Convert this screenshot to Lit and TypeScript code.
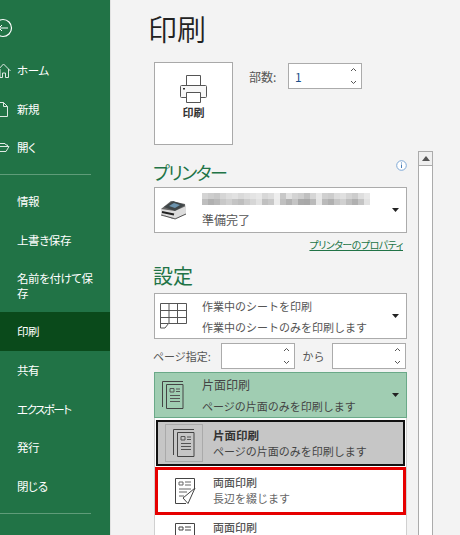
import { LitElement, html, css, svg } from "lit";
import { customElement } from "lit/decorators.js";

const BLUR = [
  [212,205,200,214,222,226,218,224,228,232,216,222,238,200,226,212,206,192,214,232,208,204,220,224,212,204,222,232],
  [190,176,184,200,208,196,190,204,214,226,192,200,236,192,178,196,170,168,186,230,186,176,198,208,190,176,196,226],
];

const chevrons = html`<span class="spin"><svg width="7" height="22" viewBox="0 0 7 22"><path class="chev" d="M1 6 3.500 3.500 6 6M1 16 3.500 18.500 6 16"/></svg></span>`;
const caret = html`<svg class="caret" width="7" height="4" viewBox="0 0 7 4"><path d="M0 0h7L3.500 4z" fill="#222"/></svg>`;

const pageIcon = svg`<path d="M.5 26V.5H21" fill="none" stroke="#444"/><path d="M4.500 3.500h16.500v24H4.500z" fill="none" stroke="#444"/><path d="M8 7.500h4v3.500H8zM14 8h4M14 10.500h4M8 14.500h10M8 17.500h10M8 20.500h10" fill="none" stroke="#555"/>`;

@customElement("app-root")
export class AppRoot extends LitElement {
  static styles = css`
    :host { display: block; width: 460px; height: 535px; overflow: hidden; background: #f3f3f3; font-family: "Noto Sans CJK JP", "Noto Sans", sans-serif; color: #444; }
    * { box-sizing: border-box; }
    .app { display: flex; height: 535px; }
    .side { width: 111px; flex: none; background: #217346; color: #fff; font-size: 11.500px; font-feature-settings: "palt"; letter-spacing: -0.4px; display: flex; flex-direction: column; padding-top: 16px; border-right: 1px solid #e2e2e2; }
    .back { height: 24px; margin-bottom: 11.500px; }
    .back svg { display: block; }
    .item { height: 38.600px; display: flex; align-items: center; flex: none; line-height: 15px; }
    .item .ic { width: 17px; flex: none; display: flex; }
    .item.two { height: 53px; align-items: center; }
    .item.active { background: #0a4a1b; height: 39px; }
    .item.narrow { letter-spacing: -1.500px; }
    .item span.t { flex: 1; padding-right: 4px; }
    .sep { height: 1px; background: #5f9c79; width: 91px; flex: none; margin: 7px 0 7px; }
    .main { flex: 1; padding-left: 43px; display: flex; flex-direction: column; min-width: 0; }
    h1 { margin: 8px 0 0 -6px; font-size: 29px; line-height: 40px; height: 40px; font-weight: 350; color: #222; }
    .top { display: flex; margin-top: 14px; height: 83px; }
    .printbtn { width: 79px; height: 83px; background: #fff; border: 1px solid #a9a9a9; display: flex; flex-direction: column; align-items: center; padding-top: 12px; font-size: 11px; font-weight: 700; color: #333; line-height: 15px; gap: 2px; }
    .copies { display: flex; align-items: center; margin-left: 16px; height: 26px; margin-top: 1px; font-size: 12px; }
    .copies label { width: 39px; color: #555; }
    .spinbox { height: 26px; background: #fff; border: 1px solid #ababab; display: flex; align-items: center; justify-content: space-between; padding: 0 4px 0 6px; font-size: 12px; }
    .copies .spinbox { width: 74px; color: #1c4f8a; }
    .spin { display: flex; }
    .chev { fill: none; stroke: #555; stroke-width: 1; }
    .lower { display: flex; margin-top: 6px; flex: 1; min-height: 0; }
    .col { width: 253px; flex: none; display: flex; flex-direction: column; position: relative; }
    h2 { margin: 0; font-weight: 400; color: #217346; line-height: 24px; height: 24px; font-feature-settings: "palt"; }
    .h-printer { margin: 9px 0 3px -1px; font-size: 18px; letter-spacing: -1.500px; }
    .info { position: absolute; right: 0; top: 9px; }
    .sel { height: 46px; background: #fff; border: 1px solid #ababab; display: flex; align-items: center; padding-right: 7px; font-size: 11px; flex: none; }
    .sel .ico { width: 36px; margin-right: 11px; flex: none; display: flex; justify-content: center; }
    .sel .txt { flex: 1; display: flex; flex-direction: column; gap: 5px; line-height: 16px; min-width: 0; white-space: nowrap; color: #555; }
    .sel .big { font-size: 12px; }
    .sel.printer .txt { gap: 7px; padding-top: 1px; }
    .sel.green { background: #a0cdb2; border-color: #6aa988; color: #333; }
    .sel.green .txt { color: #444; }
    .blur { display: flex; flex-direction: column; width: 168px; height: 12px; }
    .blur .r { display: flex; height: 6px; }
    .blur i { flex: 1; display: block; }
    .link { align-self: flex-end; margin: 4px 4px 0 0; font-size: 10px; letter-spacing: -0.500px; line-height: 16px; color: #217346; text-decoration: underline; font-feature-settings: "palt"; }
    .h-set { margin: 11px 0 5px -1px; font-size: 20px; }
    .pages { display: flex; align-items: center; margin: 4px 0 3px; height: 26px; font-size: 11px; color: #555; }
    .pages .lbl { width: 68px; white-space: nowrap; margin-left: -1px; }
    .pages .spinbox { width: 74px; }
    .pages .kara { width: 37px; text-align: center; }
    .menu { background: #fff; border-left: 1px solid #d0d0d0; border-right: 1px solid #d0d0d0; padding: 2px 0 0 0; flex: 1; display: flex; flex-direction: column; gap: 1px; font-size: 11px; overflow: hidden; }
    .opt { height: 48px; flex: none; display: flex; align-items: center; line-height: 16px; }
    .opt .oi { width: 44px; height: 30px; margin: 0 6px 0 5px; flex: none; display: flex; align-items: center; justify-content: center; }
    .opt .ot { display: flex; flex-direction: column; color: #666; }
    .opt .ot b { font-weight: 500; color: #555; }
    .opt.sel1 { background: #c6c6c6; border: 2px solid #111; height: 46px; margin: 0 1px; }
    .opt.sel1 .oi { border: 1px solid #aaa; height: 38px; width: 38px; margin: 0 10px 0 7px; }
    .opt.sel1 .ot { color: #444; }
    .opt.sel1 .ot b { font-weight: 700; color: #333; font-size: 11.500px; }
    .opt.red { border: 3px solid #e60000; }
    .opt.red .ot { padding-bottom: 3px; }
    .opt.last { height: 20px; align-items: flex-start; padding-top: 3px; }
    .opt.last .oi { margin: 4px 6px 0 8px; height: 28px; align-items: flex-start; }
    .scroll { width: 15px; flex: none; margin-left: 11px; background: #fff; border: 1px solid #ababab; border-bottom: none; display: flex; flex-direction: column; align-self: stretch; }
    .scroll .up { height: 14px; background: #f0f0f0; border-bottom: 1px solid #ababab; display: flex; align-items: center; justify-content: center; }
  `;

  render() {
    const items = ["情報", "上書き保存"];
    return html`<div class="app">
      <nav class="side">
        <div class="back"><svg width="17" height="24" viewBox="0 0 17 24"><circle cx="3" cy="12" r="8.500" fill="none" stroke="#fff" stroke-width="1.200"/><path d="M-1 12h9M2 9l-3 3 3 3" fill="none" stroke="#fff"/></svg></div>
        <div class="item"><span class="ic"><svg width="12" height="15" viewBox="0 0 12 15"><path d="M-3 8 3.500 1 10.500 8M0 6v8.500h2.500V10h3v4.500H8.500V6" fill="none" stroke="#dfe9e3"/></svg></span><span class="t">ホーム</span></div>
        <div class="item"><span class="ic"><svg width="10" height="15" viewBox="0 0 10 15"><path d="M0 .5h3.500L7.500 4.500V14.500H0M3.500 .5v4h4" fill="none" stroke="#dfe9e3"/></svg></span><span class="t">新規</span></div>
        <div class="item"><span class="ic"><svg width="10" height="11" viewBox="0 0 10 11"><path d="M0 1.500h5l1 1.500h1.500v1.500M0 9.500H6L9 4.500H0" fill="none" stroke="#dfe9e3"/></svg></span><span class="t">開く</span></div>
        <div class="sep"></div>
        ${items.map((t) => html`<div class="item"><span class="ic"></span><span class="t">${t}</span></div>`)}
        <div class="item two"><span class="ic"></span><span class="t">名前を付けて保<br />存</span></div>
        <div class="item active"><span class="ic"></span><span class="t">印刷</span></div>
        <div class="item"><span class="ic"></span><span class="t">共有</span></div>
        <div class="item narrow"><span class="ic"></span><span class="t">エクスポート</span></div>
        <div class="item"><span class="ic"></span><span class="t">発行</span></div>
        <div class="item"><span class="ic"></span><span class="t">閉じる</span></div>
        <div class="sep"></div>
      </nav>
      <main class="main">
        <h1>印刷</h1>
        <div class="top">
          <div class="printbtn">
            <svg width="28" height="28" viewBox="0 0 28 28"><path d="M6.500.5h14v10h-14z" fill="none" stroke="#555"/><path d="M6 22.500H1.500a1 1 0 0 1-1-1V11.500a1 1 0 0 1 1-1h24a1 1 0 0 1 1 1v10a1 1 0 0 1-1 1H21" fill="#f7f7f7" stroke="#555"/><path d="M6.500 17.500h14v10h-14z" fill="#fff" stroke="#555"/><path d="M3 13h2v1.500H3z" fill="#333"/></svg>
            <span>印刷</span>
          </div>
          <div class="copies"><label>部数:</label><div class="spinbox"><span>1</span>${chevrons}</div></div>
        </div>
        <div class="lower">
          <div class="col">
            <h2 class="h-printer">プリンター</h2>
            <svg class="info" width="11" height="11" viewBox="0 0 11 11"><circle cx="5.500" cy="5.500" r="4.800" fill="#fff" stroke="#7fa9d6"/><path d="M5.500 4.500v3.500M5.500 2.500v1" stroke="#4a7fb8"/></svg>
            <div class="sel printer">
              <span class="ico"><svg width="27" height="20" viewBox="0 0 27 20"><path d="M1 9 11 1 25 4 26 14 13 19 1 14z" fill="#666"/><path d="M4 7 13 1 25 5 15 11z" fill="#3f4648"/><path d="M9 6 14 3 20 5 15 8z" fill="#6c93ad"/><path d="M1 9 15 11 26 6V14L14 19 1 14z" fill="#dcdcdc"/><path d="M2 12 14 14.500" stroke="#222" stroke-width="2" fill="none"/><path d="M1 15 14 18.500 15 19 26 14" stroke="#555" fill="none"/></svg></span>
              <div class="txt">
                <div class="blur">${BLUR.map((row) => html`<div class="r">${row.map((g) => html`<i style="background: rgb(${g},${g},${g})"></i>`)}</div>`)}</div>
                <span class="big">準備完了</span>
              </div>
              ${caret}
            </div>
            <a class="link">プリンターのプロパティ</a>
            <h2 class="h-set">設定</h2>
            <div class="sel">
              <span class="ico"><svg width="27" height="26" viewBox="0 0 27 26"><path d="M.5 .5h26v20H8.500L5 25H.5zM.5 7.500h26M.5 14.500h26M.5 20.500h8M9 .5v20M17.500 .5v20" fill="none" stroke="#555"/></svg></span>
              <div class="txt"><span>作業中のシートを印刷</span><span>作業中のシートのみを印刷します</span></div>
              ${caret}
            </div>
            <div class="pages">
              <span class="lbl">ページ指定:</span>
              <div class="spinbox"><span></span>${chevrons}</div>
              <span class="kara">から</span>
              <div class="spinbox"><span></span>${chevrons}</div>
            </div>
            <div class="sel green">
              <span class="ico"><svg width="22" height="28" viewBox="0 0 22 28">${pageIcon}</svg></span>
              <div class="txt"><span class="big">片面印刷</span><span>ページの片面のみを印刷します</span></div>
              ${caret}
            </div>
            <div class="menu">
              <div class="opt sel1">
                <span class="oi"><svg width="22" height="28" viewBox="0 0 22 28">${pageIcon}</svg></span>
                <div class="ot"><b>片面印刷</b><span>ページの片面のみを印刷します</span></div>
              </div>
              <div class="opt red">
                <span class="oi"><svg width="22" height="28" viewBox="0 0 22 28"><path d="M12 26.500H1.500V1.500h19v11" fill="none" stroke="#444"/><path d="M5 5h4v3H5zM11 5h6M11 8h6M5 12h12M5 15h8M5 19h5" fill="none" stroke="#666"/><path d="M21 11 14 26.500 9 21z" fill="#fff" stroke="#444"/></svg></span>
                <div class="ot"><b>両面印刷</b><span>長辺を綴じます</span></div>
              </div>
              <div class="opt last">
                <span class="oi"><svg width="20" height="28" viewBox="0 0 20 28"><path d="M.5.5h19v27H.5zM4 4h4v3H4zM10 4h6M10 7h6" fill="none" stroke="#444"/></svg></span>
                <div class="ot"><b>両面印刷</b></div>
              </div>
            </div>
          </div>
          <div class="scroll"><div class="up"><svg width="8" height="5" viewBox="0 0 8 5"><path d="M0 5h8L4 0z" fill="#555"/></svg></div></div>
        </div>
      </main>
    </div>`;
  }
}
